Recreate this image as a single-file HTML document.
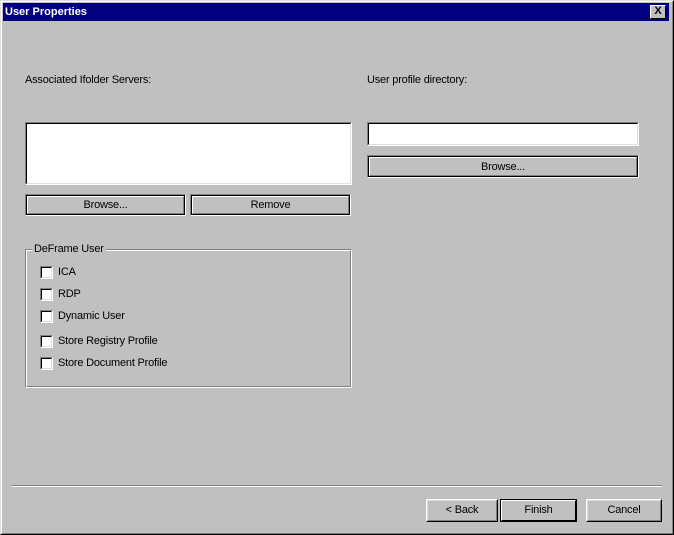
<!DOCTYPE html>
<html><head><style>
*{margin:0;padding:0;box-sizing:border-box}
body{width:674px;height:535px;background:#c0c0c0;font-family:"Liberation Sans",Arial,sans-serif;font-size:11px;color:#000;position:relative;overflow:hidden;letter-spacing:-0.2px}
.win{position:absolute;left:0;top:0;width:674px;height:535px;border:1px solid;border-color:#dfdfdf #000 #000 #dfdfdf}
.win2{position:absolute;left:0;top:0;right:0;bottom:0;border:1px solid;border-color:#fff #808080 #808080 #fff}
.title{position:absolute;left:3px;top:3px;width:666px;height:18px;background:#000080;color:#fff;font-weight:bold;font-size:11px;line-height:18px;padding-left:2px;letter-spacing:0}
.x{position:absolute;right:3px;top:2px;width:16px;height:14px;background:#c0c0c0;border:1px solid;border-color:#fff #000 #000 #fff;color:#000;font-size:11px;line-height:11px;text-align:center;font-weight:bold}
.a{position:absolute}
.sunk{background:#fff;border:1px solid;border-color:#808080 #fff #fff #808080}
.sunk>div{position:absolute;inset:0;border:1px solid;border-color:#000 #dfdfdf #dfdfdf #000}
.btn{position:absolute;background:#c0c0c0;border:1px solid;border-color:#fff #000 #000 #fff;text-align:center;font-size:11px}
.btn>span{position:absolute;inset:0;border:1px solid;border-color:#dfdfdf #808080 #808080 #dfdfdf}
.wb{position:absolute;border:1px solid;border-color:#808080 #fff #fff #808080}
.wb>.in{position:absolute;inset:0;border:1px solid #000;background:#c0c0c0;text-align:center}
.wb>.in>span{position:absolute;inset:0;border:1px solid;border-color:#fff #808080 #808080 #fff}
.cb{position:absolute;left:40px;width:13px;height:13px;background:#fff;border:1px solid;border-color:#808080 #fff #fff #808080}
.cb::after{content:"";position:absolute;inset:0;border:1px solid;border-color:#000 #dfdfdf #dfdfdf #000}
.lb{position:absolute;left:58px}
</style></head><body>
<div class="win"><div class="win2"></div></div>
<div class="title">User Properties<div class="x">X</div></div>
<div class="a" style="left:25px;top:74px">Associated Ifolder Servers:</div>
<div class="a" style="left:367px;top:74px">User profile directory:</div>
<div class="a sunk" style="left:25px;top:122px;width:327px;height:63px"><div></div></div>
<div class="a sunk" style="left:367px;top:122px;width:272px;height:24px"><div></div></div>
<div class="wb" style="left:25px;top:194px;width:161px;height:22px"><div class="in"><span style="line-height:17px">Browse...</span></div></div>
<div class="wb" style="left:190px;top:194px;width:161px;height:22px"><div class="in"><span style="line-height:17px">Remove</span></div></div>
<div class="wb" style="left:367px;top:155px;width:272px;height:23px"><div class="in"><span style="line-height:18px">Browse...</span></div></div>
<div class="a" style="left:25px;top:249px;width:327px;height:139px;border:1px solid;border-color:#808080 #fff #fff #808080"><div style="position:absolute;inset:0;border:1px solid;border-color:#fff #808080 #808080 #fff"></div></div>
<div class="a" style="left:32px;top:243px;background:#c0c0c0;padding:0 2px">DeFrame User</div>
<div class="cb" style="top:266px"></div><div class="lb" style="top:266px">ICA</div>
<div class="cb" style="top:288px"></div><div class="lb" style="top:288px">RDP</div>
<div class="cb" style="top:310px"></div><div class="lb" style="top:310px">Dynamic User</div>
<div class="cb" style="top:335px"></div><div class="lb" style="top:335px">Store Registry Profile</div>
<div class="cb" style="top:357px"></div><div class="lb" style="top:357px">Store Document Profile</div>
<div class="a" style="left:12px;top:485px;width:650px;height:2px;border-top:1px solid #808080;border-bottom:1px solid #fff"></div>
<div class="btn" style="left:426px;top:499px;width:72px;height:23px;line-height:20px"><span></span>&lt; Back</div>
<div class="btn" style="left:500px;top:499px;width:77px;height:23px;line-height:20px;border:1px solid #000"><span style="border-color:#fff #000 #000 #fff"></span>Finish</div>
<div class="btn" style="left:586px;top:499px;width:76px;height:23px;line-height:20px"><span></span>Cancel</div>
</body></html>
